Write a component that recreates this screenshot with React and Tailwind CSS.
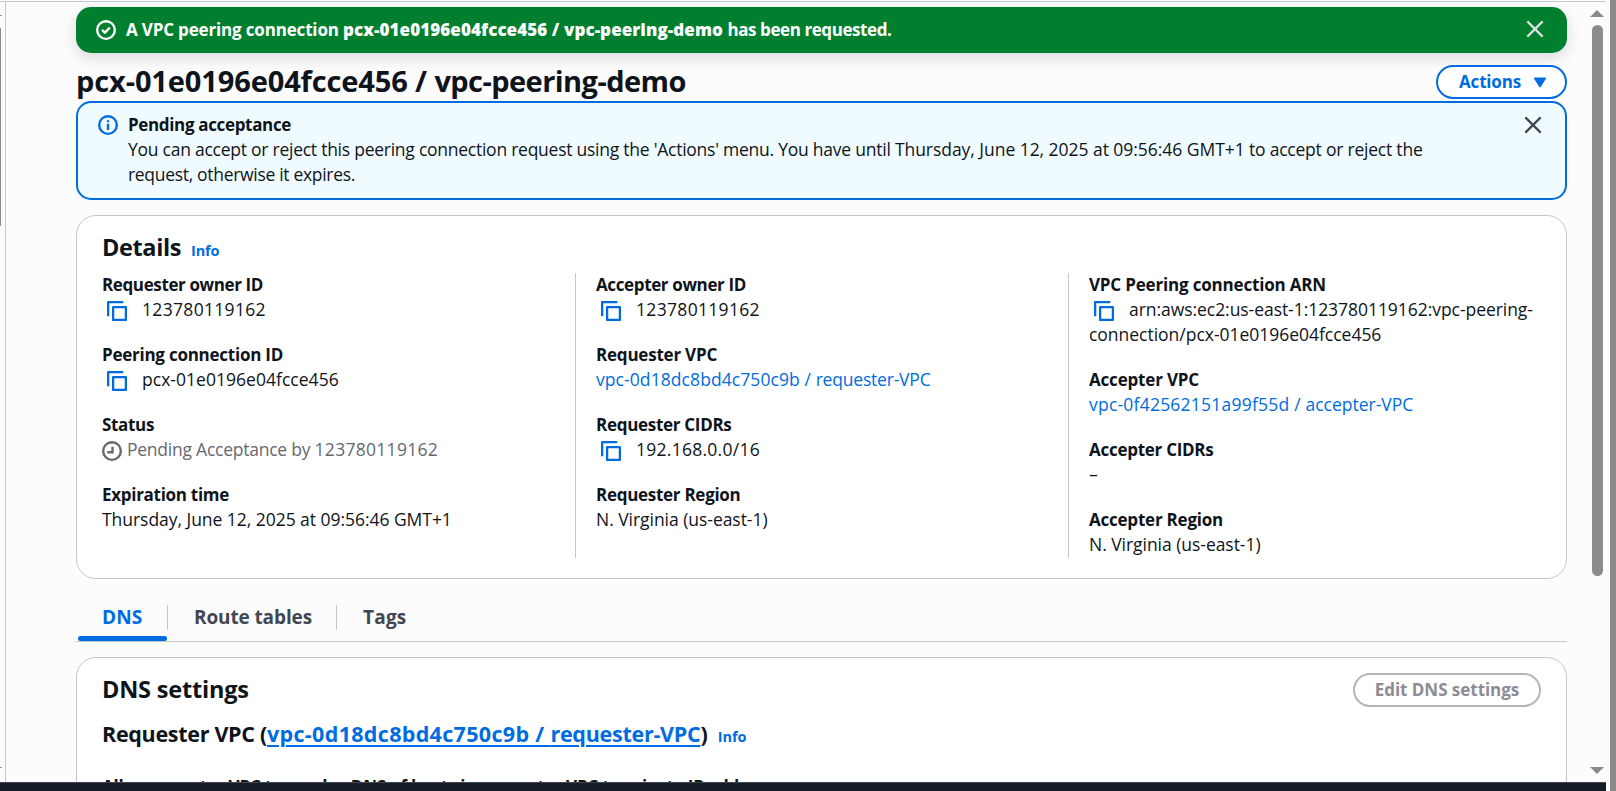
import React from 'react';

function T({ className = '', children }) {
  return <span className={'whitespace-pre ' + className}>{children}</span>;
}

function CopyIcon() {
  return (
    <svg className="mr-[15px] ml-[5px] inline-block size-5 align-[-5px] text-[#006ce0]" viewBox="0 0 20 20" fill="none" stroke="currentColor" strokeWidth="2.3">
      <path d="M16.3 1.15H1.15v14.2" strokeLinejoin="round" />
      <rect x="6.1" y="6.1" width="12.8" height="12.8" strokeLinejoin="round" />
    </svg>
  );
}

function CloseIcon({ className }) {
  return (
    <svg className={className} viewBox="0 0 20 20" fill="none" stroke="currentColor" strokeWidth="2.5">
      <path d="M1.5 1.5l17 17M18.5 1.5l-17 17" />
    </svg>
  );
}

function Field({ label, track, children }) {
  return (
    <div className="leading-[25px]">
      <div className="text-[17px] font-bold [font-stretch:97%]"><T className={track}>{label}</T></div>
      <div>{children}</div>
    </div>
  );
}

export default function App() {
  return (
    <div className="flex h-[791px] w-[1616px] overflow-hidden bg-[#fcfcfd] font-['Open_Sans','Noto_Sans',sans-serif] text-[17.5px] text-[#0f141a]">
      <div className="flex w-[1606px] flex-col">
        <div className="h-px bg-white" />
        <div className="h-px bg-[#c6c6cd]" />
        <div className="flex h-[780px] overflow-hidden">
          <div className="flex w-[5px] shrink-0 flex-col bg-[#fcfcfd]">
            <div className="mt-[13px] h-px w-[2px] bg-[#8b8b8b]" />
            <div className="mt-3 h-[198px] w-px bg-[#8b8b8b]" />
            <div className="mt-[541px] h-px w-[2px] bg-[#8b8b8b]" />
          </div>
          <div className="w-px shrink-0 bg-[#c6c6cd]" />
          <main className="ml-[70px] flex w-[1491px] shrink-0 flex-col pt-[5px]">
            <div className="flex h-[46px] shrink-0 items-center rounded-[15px] bg-[#00802f] pr-[23px] pl-5 text-white shadow-[0_5px_14px_1px_rgba(0,7,22,0.12)]">
              <svg className="mr-[10px] size-5" viewBox="0 0 16 16" fill="none" stroke="currentColor" strokeWidth="1.9">
                <circle cx="8" cy="8" r="7.05" />
                <path d="M4.8 7.9l2.3 2.2 3.9-4" />
              </svg>
              <div className="pb-0.5 text-[17px] leading-[25px] font-bold [font-stretch:97%]">
                <T className="tracking-[-0.166px]">{'A VPC peering connection '}</T>
                <T className="font-extrabold [font-stretch:100%] tracking-[0.08px]">{'pcx-01e0196e04fcce456 / vpc-peering-demo '}</T>
                <T className="tracking-[-0.419px]">has been requested.</T>
              </div>
              <CloseIcon className="mb-[3px] ml-auto size-[18px] text-[#dedee3]" />
            </div>

            <div className="mt-3 flex h-[36px] shrink-0 items-start justify-between">
              <h1 className="text-[29px] leading-[32px] font-bold">
                <T className="tracking-[-0.12px]">{'pcx-01e0196e04fcce456 / '}</T>
                <T className="tracking-[-0.56px]">vpc-peering-demo</T>
              </h1>
              <div className="flex h-[34px] w-[131px] items-center rounded-full border-2 border-[#006ce0] bg-white pl-[21px] text-[17px] leading-[25px] font-bold text-[#006ce0]">
                <T className="pb-0.5 tracking-[-0.17px]">Actions</T>
                <svg className="ml-[12px] h-[11px] w-[14px]" viewBox="0 0 14 11" fill="currentColor">
                  <path d="M1.5 0.5h11q1 0.3 0.4 1.3L7.8 9.8q-.8 1-1.6 0L1.1 1.8Q.5.8 1.5.5z" />
                </svg>
              </div>
            </div>

            <div className="flex h-[99px] shrink-0 items-start rounded-[15px] border-2 border-[#006ce0] bg-[#f0fbff] pt-[9px] pr-[23px] pl-5">
              <svg className="mt-[3px] mr-[10px] size-5 text-[#006ce0]" viewBox="0 0 16 16" fill="none" stroke="currentColor" strokeWidth="1.9">
                <circle cx="8" cy="8" r="7.05" />
                <path d="M8 4.1v1.7M8 7v4.9" />
              </svg>
              <div className="leading-[25px]">
                <div className="text-[17px] font-bold [font-stretch:97%]"><T className="tracking-[-0.344px]">Pending acceptance</T></div>
                <div>
                  <T className="tracking-[-0.25px]">{"You can accept or reject this peering connection request using the 'Actions' menu. "}</T>
                  <T className="tracking-[-0.24px]">{'You have until '}</T>
                  <T className="tracking-[-0.04px]">Thursday, June 12, 2025 at 09:56:46 GMT+1</T>
                  <T className="tracking-[-0.22px]">{' to accept or reject the'}</T>
                </div>
                <div><T className="tracking-[-0.31px]">request, otherwise it expires.</T></div>
              </div>
              <CloseIcon className="mt-[4px] ml-auto size-[18px] text-[#424650]" />
            </div>

            <section className="mt-[15px] h-[364px] shrink-0 rounded-[20px] border border-[#c6c6cd] bg-white px-[25px]">
              <div className="flex h-[57px] items-baseline pt-4">
                <h2 className="text-[23.5px] leading-[30px] font-bold [font-stretch:97%]"><T className="tracking-[-0.386px]">Details</T></h2>
                <a className="ml-[10px] text-[14.5px] leading-5 font-bold text-[#006ce0] [font-stretch:97%]"><T className="tracking-[-0.109px]">Info</T></a>
              </div>
              <div className="flex h-[285px]">
                <div className="-mt-px flex w-[473px] flex-col gap-5">
                  <Field label="Requester owner ID" track="tracking-[-0.384px]"><CopyIcon /><T className="tracking-[0.32px]">123780119162</T></Field>
                  <Field label="Peering connection ID" track="tracking-[-0.246px]"><CopyIcon /><T className="tracking-[0.03px]">pcx-01e0196e04fcce456</T></Field>
                  <Field label="Status" track="tracking-[-0.336px]">
                    <span className="text-[#656871]">
                      <svg className="mr-[5px] inline-block size-5 align-[-5px]" viewBox="0 0 16 16" fill="none" stroke="currentColor" strokeWidth="1.9">
                        <circle cx="8" cy="8" r="7.05" />
                        <path d="M8.4 4.6V9H4.2" />
                      </svg>
                      <T className="tracking-[-0.24px]">{'Pending Acceptance by '}</T>
                      <T className="tracking-[0.29px]">123780119162</T>
                    </span>
                  </Field>
                  <Field label="Expiration time" track="tracking-[-0.285px]"><T className="tracking-[-0.04px]">Thursday, June 12, 2025 at 09:56:46 GMT+1</T></Field>
                </div>
                <div className="flex w-[493px] border-l border-[#c6c6cd] pl-5">
                  <div className="-mt-px flex flex-col gap-5">
                    <Field label="Accepter owner ID" track="tracking-[-0.366px]"><CopyIcon /><T className="tracking-[0.32px]">123780119162</T></Field>
                    <Field label="Requester VPC" track="tracking-[-0.216px]">
                      <a className="text-[#006ce0]">
                        <T className="tracking-[0.08px]">{'vpc-0d18dc8bd4c750c9b / '}</T>
                        <T className="tracking-[-0.2px]">requester-VPC</T>
                      </a>
                    </Field>
                    <Field label="Requester CIDRs" track="tracking-[-0.298px]"><CopyIcon /><T className="tracking-[0.26px]">192.168.0.0/16</T></Field>
                    <Field label="Requester Region" track="tracking-[-0.282px]"><T className="tracking-[-0.04px]">N. Virginia (us-east-1)</T></Field>
                  </div>
                </div>
                <div className="flex flex-1 border-l border-[#c6c6cd] pl-5">
                  <div className="-mt-px flex flex-col gap-5">
                    <Field label="VPC Peering connection ARN" track="tracking-[-0.18px]">
                      <CopyIcon /><T className="tracking-[-0.05px]">arn:aws:ec2:us-east-1:123780119162:vpc-peering-</T>
                      <br /><T className="tracking-[-0.02px]">connection/pcx-01e0196e04fcce456</T>
                    </Field>
                    <Field label="Accepter VPC" track="tracking-[-0.178px]">
                      <a className="text-[#006ce0]">
                        <T className="tracking-[0.22px]">{'vpc-0f42562151a99f55d / '}</T>
                        <T className="tracking-[-0.02px]">accepter-VPC</T>
                      </a>
                    </Field>
                    <Field label="Accepter CIDRs" track="tracking-[-0.271px]">–</Field>
                    <Field label="Accepter Region" track="tracking-[-0.222px]"><T className="tracking-[-0.04px]">N. Virginia (us-east-1)</T></Field>
                  </div>
                </div>
              </div>
            </section>

            <nav className="flex h-[63px] shrink-0 border-b border-[#c6c6cd] pt-[26px] pl-0.5 text-[19px] leading-[25px] font-bold text-[#424650]">
              <div className="flex h-9 w-[89px] flex-col text-[#006ce0]">
                <div className="pl-6"><T className="tracking-[0.17px]">DNS</T></div>
                <div className="mt-[6px] h-[5px] rounded-full bg-[#006ce0]" />
              </div>
              <div className="h-[25px] w-px bg-[#c6c6cd]" />
              <div className="w-[168px] pl-[26px]"><T className="tracking-[-0.118px]">Route tables</T></div>
              <div className="h-[25px] w-px bg-[#c6c6cd]" />
              <div className="pl-[26px]"><T className="tracking-[0.2px]">Tags</T></div>
            </nav>

            <section className="mt-[15px] h-[400px] shrink-0 rounded-[20px] border border-[#c6c6cd] bg-white px-[25px] pt-[15px]">
              <div className="flex h-[34px] items-start justify-between">
                <h2 className="text-[23.5px] leading-[32px] font-bold [font-stretch:97%]"><T className="tracking-[-0.2px]">DNS settings</T></h2>
                <div className="flex h-[34px] w-[188px] items-center justify-center rounded-full border-2 border-[#b4b4bb] text-[17px] font-bold text-[#8c8c94]">
                  <T className="tracking-[-0.037px]">Edit DNS settings</T>
                </div>
              </div>
              <div className="mt-[12px] flex items-baseline leading-[30px]">
                <h3 className="text-[21.5px] font-bold">
                  <T className="tracking-[-0.297px]">Requester VPC (</T>
                  <a className="text-[#006ce0] underline decoration-2 underline-offset-3">
                    <T className="tracking-[0.32px]">{'vpc-0d18dc8bd4c750c9b / '}</T>
                    <T className="tracking-[-0.26px]">requester-VPC</T>
                  </a>
                  <T>)</T>
                </h3>
                <a className="ml-[10px] text-[14.5px] font-bold tracking-[-0.109px] text-[#006ce0] [font-stretch:97%]">Info</a>
              </div>
              <div className="mt-[22px] text-[17px] leading-[25px] font-bold"><T className="tracking-[-0.207px]">Allow accepter VPC to resolve DNS of hosts in requester VPC to private IP addresses</T></div>
            </section>
          </main>
          <div className="ml-[23px] flex w-[14px] shrink-0 flex-col items-center pt-2">
            <svg className="h-[7px] w-[14px] shrink-0" viewBox="0 0 14 7" fill="#8b8b8b"><path d="M7 0l7 7H0z" /></svg>
            <div className="mt-2 h-[551px] w-[11px] shrink-0 rounded-full bg-[#8b8b8b]" />
            <svg className="mt-[191px] h-[7px] w-[14px] shrink-0" viewBox="0 0 14 7" fill="#8b8b8b"><path d="M0 0h14L7 7z" /></svg>
          </div>
        </div>
        <div className="h-[9px] border-t border-[#424650] bg-[#161d26]" />
      </div>
      <div className="w-1 bg-[#fcfcfd]" />
      <div className="flex-1 bg-[#8b8b8b]" />
    </div>
  );
}
